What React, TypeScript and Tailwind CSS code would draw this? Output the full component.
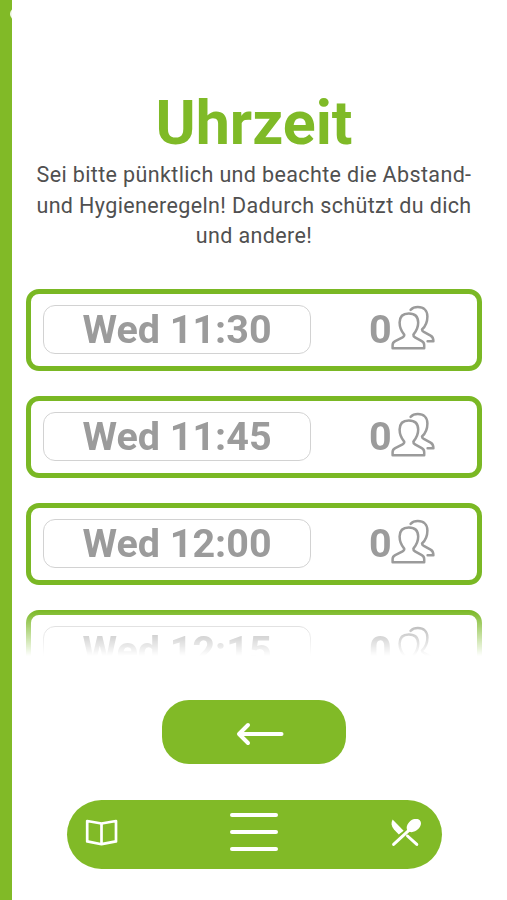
const slots = [
  { id: 1, time: 'Wed 11:30', count: 0 },
  { id: 2, time: 'Wed 11:45', count: 0 },
  { id: 3, time: 'Wed 12:00', count: 0 },
  { id: 4, time: 'Wed 12:15', count: 0 },
];

function PeopleIcon() {
  return (
    <svg className="-ml-[1.500px] overflow-visible" width="46" height="46" viewBox="0 0 46 46" fill="none" stroke="currentColor" strokeWidth="2.5" strokeLinejoin="round" strokeLinecap="round">
      <path d="M14.200 27.600C11.200 24.200 9.600 20 9.600 15.600C9.600 9.600 13 6.400 18.800 6.400C24.600 6.400 28.200 9.600 28.200 15.600C28.200 20 26.400 24.200 23.400 27.600C23.200 29 23.800 29.700 25 30.400L31.800 34.200C33.600 35.200 34.200 36.200 34.200 38V41.200H2.600V38C2.600 36.200 3.400 35.200 5.200 34.200L12.600 30.400C13.900 29.700 14.500 29 14.200 27.600Z" />
      <path d="M20.600 2.800C22.600 .7 24.800 0 27.800 0C33.800 0 37.400 3.600 37.400 9.400C37.400 14.200 35.800 19 32 22.500C32 23.700 32.600 24.200 33.800 24.900L40.600 28.600C42.800 29.800 43.400 31 43.400 34.200H37.600" />
    </svg>
  );
}

function SlotCard({ time, count }: { time: string; count: number }) {
  return (
    <div className="flex h-[82px] shrink-0 items-center rounded-[13px] border-[5px] border-[#7ab824] pb-px pl-3 text-[39.500px] font-bold text-[#9b9b9b]">
      <div className="flex h-[49px] w-[268px] items-center justify-center rounded-[12px] border-[1.500px] border-[#d2d2d2] pt-px leading-none">{time}</div>
      <div className="ml-[58px] flex items-center pt-px leading-none">
        <span>{count}</span>
        <PeopleIcon />
      </div>
    </div>
  );
}

function BookIcon() {
  return (
    <svg width="34" height="30" viewBox="0 0 34 30" fill="none" stroke="white" strokeWidth="2.700" strokeLinejoin="round">
      <path d="M16.500 4.500L2.200 2V22.400L16.500 25.200L31 22.400V2Z" />
      <path d="M16.500 4.500V25.200" />
    </svg>
  );
}

function CutleryIcon() {
  return (
    <svg width="32" height="30" viewBox="0 0 32 30" fill="white">
      <path d="M2.600 .6C.8 4 1.200 7.400 4 10.400L8.800 15.400L13.600 11.800Z" />
      <path d="M17.500 17L26.800 25.400M3.600 25.400L20.500 9.800" stroke="white" strokeWidth="3" strokeLinecap="round" />
      <path d="M17.600 11.800C15.600 8.900 17 5.100 19.800 2.400C23 -.5 27.600 -1 29.800 1.200C32 3.400 31 7.300 28.200 10.100C25.200 13 20.800 14.300 17.600 11.800Z" />
    </svg>
  );
}

export default function App() {
  return (
    <div className="flex h-[900px] w-[507px] overflow-hidden bg-white font-['Roboto',sans-serif]">
      <div className="flex w-3 shrink-0 justify-end overflow-hidden bg-[#81ba27] pt-2">
        <div className="-mr-2.5 h-3 w-3 shrink-0 rounded-full bg-white opacity-90" />
      </div>
      <main className="flex flex-1 flex-col items-center pt-[88px] pr-[25px] pl-[14px]">
        <h1 className="text-[61px] leading-[70px] font-bold text-[#7fba27]">Uhrzeit</h1>
        <p className="mt-[2px] text-center text-[21.500px] leading-[30.500px] tracking-[0.37px] whitespace-nowrap text-[#505050]">
          Sei bitte pünktlich und beachte die Abstand-<br />
          und Hygieneregeln! Dadurch schützt du dich<br />
          und andere!
        </p>
        <div className="mt-[37.500px] flex h-[367px] w-full shrink-0 flex-col gap-[25px] overflow-hidden [mask-image:linear-gradient(to_bottom,black_calc(100%-46px),transparent)]">
          {slots.map((s) => (
            <SlotCard key={s.id} time={s.time} count={s.count} />
          ))}
        </div>
        <button className="mt-[43.500px] flex h-16 w-[184px] shrink-0 items-center justify-center rounded-[27px] bg-[#81ba27] pt-[4px] pl-[12px]">
          <svg width="48" height="24" viewBox="0 0 48 24" fill="none" stroke="white" strokeWidth="4" strokeLinecap="round" strokeLinejoin="round">
            <path d="M12 3L3 12L12 21" />
            <path d="M4 12H45.500" />
          </svg>
        </button>
        <nav className="mt-9 flex h-[69px] w-[375px] shrink-0 items-center justify-between rounded-full bg-[#81ba27] pr-5 pl-[18px]">
          <BookIcon />
          <div className="flex w-12 flex-col gap-[13px] pb-[5px]">
            <div className="h-[4px] rounded-full bg-white" />
            <div className="h-[4px] rounded-full bg-white" />
            <div className="h-[4px] rounded-full bg-white" />
          </div>
          <CutleryIcon />
        </nav>
      </main>
    </div>
  );
}
